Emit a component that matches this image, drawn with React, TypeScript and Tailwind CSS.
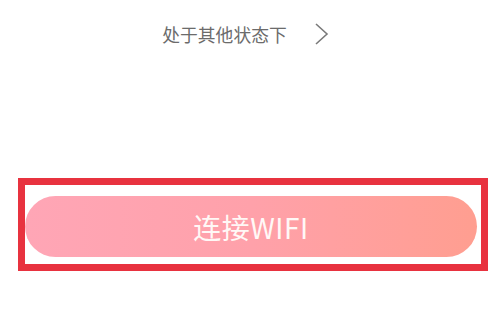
export default function App() {
  return (
    <main className="h-[319px] w-[492px] overflow-hidden bg-white pt-[23px] font-['Noto_Sans_CJK_SC','Noto_Sans',sans-serif]">
      <div className="flex items-center justify-center gap-[27px]">
        <span className="text-[17.8px] leading-[20px] text-[#6b6b6b]">处于其他状态下</span>
        <svg width="16" height="22" viewBox="0 0 16 22" fill="none" className="text-[#7a7a7a]">
          <polyline points="2,1 13,11 2,21" stroke="currentColor" strokeWidth="1.6" strokeLinejoin="miter" />
        </svg>
      </div>

      <div className="ml-[18px] mt-[133px] h-[93px] w-[470px] border-[7px] border-[#e8323f] pt-[11px]">
        <button
          type="button"
          className="flex h-[61px] w-[452px] items-center justify-center rounded-full bg-gradient-to-r from-[#ffa6b6] via-[#ffa1aa] to-[#ff9e90] text-[28px] leading-none tracking-[0.5px] text-[#fff8f6]"
        >
          连接WIFI
        </button>
      </div>
    </main>
  );
}
